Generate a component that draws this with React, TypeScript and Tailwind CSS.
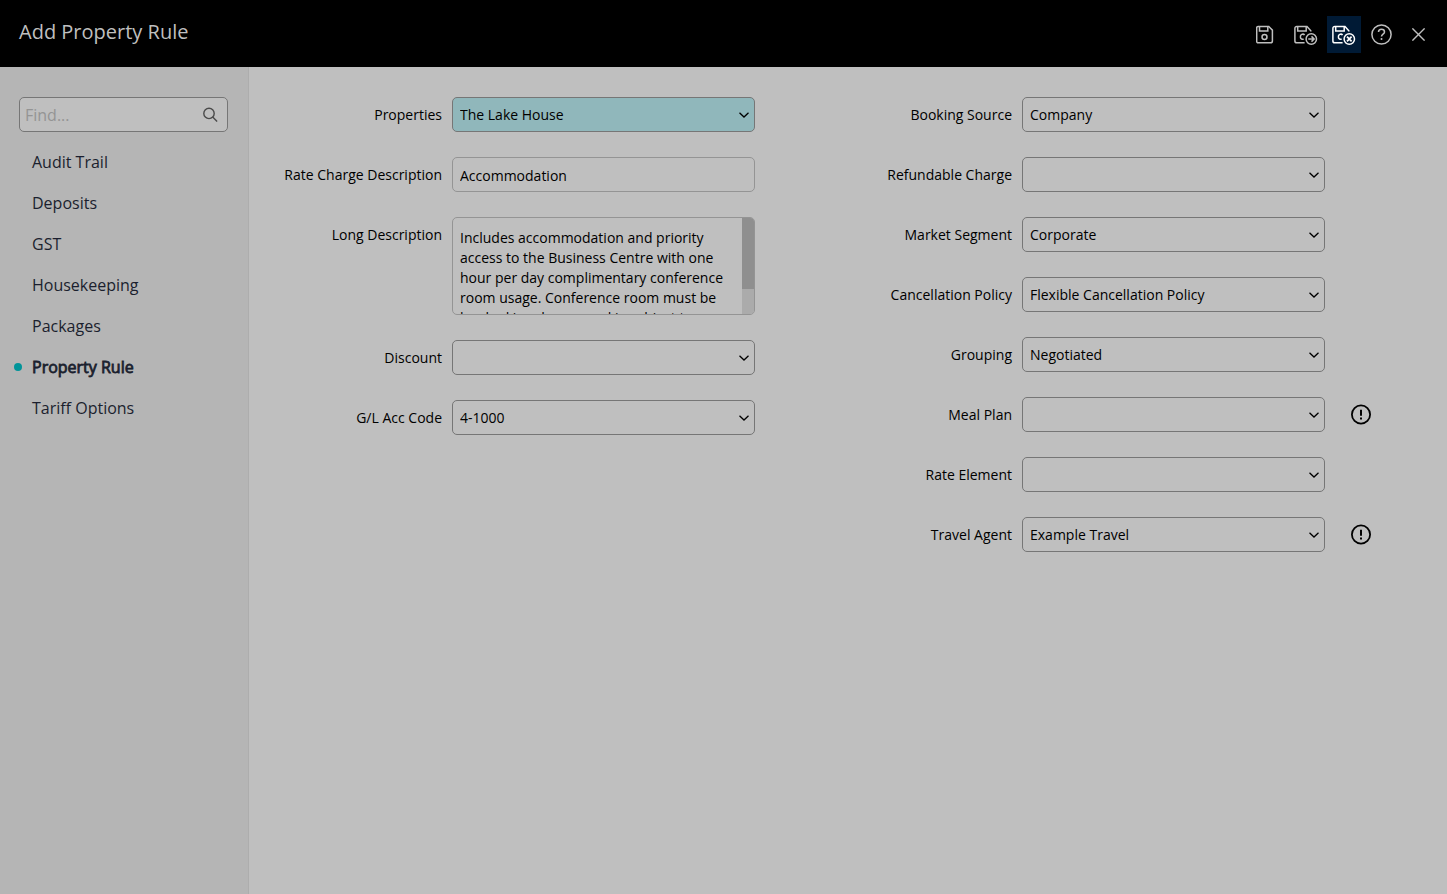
import React, { useState } from 'react';

interface FieldProps {
  id: string;
  label: string;
  info?: boolean;
  children: React.ReactNode;
}

interface SelectFieldProps {
  id: string;
  label: string;
  value?: string;
  info?: boolean;
  highlighted?: boolean;
}

const navItems = [
  'Audit Trail',
  'Deposits',
  'GST',
  'Housekeeping',
  'Packages',
  'Property Rule',
  'Tariff Options',
];

const rightFields: SelectFieldProps[] = [
  { id: 'bookingSource', label: 'Booking Source', value: 'Company' },
  { id: 'refundableCharge', label: 'Refundable Charge' },
  { id: 'marketSegment', label: 'Market Segment', value: 'Corporate' },
  { id: 'cancellationPolicy', label: 'Cancellation Policy', value: 'Flexible Cancellation Policy' },
  { id: 'grouping', label: 'Grouping', value: 'Negotiated' },
  { id: 'mealPlan', label: 'Meal Plan', info: true },
  { id: 'rateElement', label: 'Rate Element' },
  { id: 'travelAgent', label: 'Travel Agent', value: 'Example Travel', info: true },
];

const defaultDescription =
  'Includes accommodation and priority access to the Business Centre with one hour per day complimentary conference room usage. Conference room must be booked in advance and is subject to availability.';

function SaveIcon() {
  return (
    <svg className="w-[19px] h-[19px]" viewBox="0 0 19 19" fill="none" stroke="currentColor" strokeWidth="1.5">
      <path d="M2.2 1.5h10.6l3.6 3.6v10.8a1.9 1.9 0 0 1-1.9 1.9H2.2a1.5 1.5 0 0 1-1.5-1.9V3.4a1.5 1.5 0 0 1 1.5-1.9z" />
      <path d="M3.5 1.5v4.6h8.3V1.5" />
      <circle cx="8.5" cy="12" r="2.5" />
    </svg>
  );
}

function SaveActionIcon({ action }: { action: 'next' | 'close' }) {
  return (
    <svg className="w-6 h-[21px]" viewBox="0 0 24 21" fill="none" stroke="currentColor" strokeWidth="1.5">
      <path d="M10.6 18.8H2.8a1.9 1.9 0 0 1-1.9-1.9V4.4a1.9 1.9 0 0 1 1.9-1.9h10.2l3.8 4.2v.9" />
      <path d="M3.7 2.5v4.4h8.5V2.5" />
      <path d="M10.6 11a2.4 2.4 0 0 0-4.2 1.9c0 1.6 1.3 2.6 3.3 2.4" />
      <circle cx="17.3" cy="15" r="5.2" />
      {action === 'next' ? (
        <path d="M14.3 15h5.6M17.5 12.4l2.6 2.6-2.6 2.6" />
      ) : (
        <path d="M15 12.7l4.6 4.6M19.6 12.7L15 17.3" strokeWidth="1.7" />
      )}
    </svg>
  );
}

function HelpIcon() {
  return (
    <svg className="w-[21px] h-[21px]" viewBox="0 0 21 21" fill="none" stroke="currentColor" strokeWidth="1.5">
      <circle cx="10.5" cy="10.5" r="9.6" />
      <path d="M7.5 8.1c0-1.8 1.3-2.8 3-2.8s3 1 3 2.6c0 2.2-3 2.2-3 4.5" />
      <circle cx="10.5" cy="15" r="1" fill="currentColor" stroke="none" />
    </svg>
  );
}

function CloseIcon() {
  return (
    <svg className="w-[13px] h-[13px]" viewBox="0 0 13 13" fill="none" stroke="currentColor" strokeWidth="1.4">
      <path d="M.4.4l12.2 12.2M12.6.4L.4 12.6" />
    </svg>
  );
}

function InfoIcon() {
  return (
    <svg className="w-[21px] h-[21px]" viewBox="0 0 21 21" fill="none" stroke="currentColor" strokeWidth="1.8">
      <circle cx="10" cy="10.5" r="9.1" />
      <path d="M10 5.8v6M10 13.6v2" strokeWidth="2" />
    </svg>
  );
}

function Field({ id, label, info, children }: FieldProps) {
  return (
    <div className="flex items-start">
      <label htmlFor={id} className="w-[173px] shrink-0 text-right leading-[35px] mr-[10px]">
        {label}
      </label>
      <div className="relative flex flex-1 min-w-0">{children}</div>
      <div className="w-[84px] h-[35px] shrink-0 flex items-center pl-[26px]">
        {info && (
          <button type="button" aria-label={`${label} information`}>
            <InfoIcon />
          </button>
        )}
      </div>
    </div>
  );
}

function SelectField({ id, label, value = '', info, highlighted }: SelectFieldProps) {
  return (
    <Field id={id} label={label} info={info}>
      <select
        id={id}
        defaultValue={value}
        className={`appearance-none w-full h-[35px] pl-[7px] pr-6 border border-[#767676] rounded-[5px] outline-none ${
          highlighted ? 'bg-[#90b7bb]' : 'bg-[#bfbfbf]'
        }`}
      >
        <option value={value}>{value}</option>
      </select>
      <svg
        className="absolute right-[6px] top-[14px] w-[10px] h-[7px] pointer-events-none"
        viewBox="0 0 10 7"
        fill="none"
        stroke="currentColor"
        strokeWidth="1.3"
      >
        <path d="M.5 1.8L5 6l4.5-4.2" />
      </svg>
    </Field>
  );
}

function DescriptionField() {
  const [scroll, setScroll] = useState(0);

  return (
    <Field id="longDescription" label="Long Description">
      <textarea
        id="longDescription"
        defaultValue={defaultDescription}
        onScroll={(e) => setScroll(e.currentTarget.scrollTop / e.currentTarget.scrollHeight)}
        className="w-full h-[98px] pl-[7px] pr-[19px] pt-[10px] leading-5 border border-[#949494] rounded-[5px] outline-none resize-none [scrollbar-width:none]"
      />
      <div className="absolute inset-px rounded-[4px] overflow-hidden flex justify-end pointer-events-none">
        <div className="w-3 bg-[#ababab]">
          <div className="h-[71px] bg-[#8f8f8f]" style={{ marginTop: scroll * 96 }} />
        </div>
      </div>
    </Field>
  );
}

export default function App() {
  const [active, setActive] = useState('Property Rule');

  return (
    <div className="min-h-screen flex flex-col bg-[#bfbfbf] text-black text-sm font-['Open_Sans',sans-serif]">
      <header className="flex items-start justify-between bg-black text-[#bfbfbf] pt-4 pb-[14px] pl-[19px] pr-3">
        <h1 className="text-xl leading-8">Add Property Rule</h1>
        <div className="flex gap-1">
          <button type="button" aria-label="Save" className="w-[39px] h-[37px] flex items-center justify-center">
            <SaveIcon />
          </button>
          <button type="button" aria-label="Save and next" className="w-[34px] h-[37px] flex items-center justify-center">
            <SaveActionIcon action="next" />
          </button>
          <button
            type="button"
            aria-label="Save and close"
            className="w-[34px] h-[37px] flex items-center justify-center bg-[#001a35] text-white"
          >
            <SaveActionIcon action="close" />
          </button>
          <button type="button" aria-label="Help" className="w-[33px] h-[37px] flex items-center justify-center">
            <HelpIcon />
          </button>
          <button type="button" aria-label="Close" className="w-[33px] h-[37px] flex items-center justify-center">
            <CloseIcon />
          </button>
        </div>
      </header>

      <div className="flex flex-1">
        <aside className="w-[249px] shrink-0 bg-[#b5b5b5] border-r border-[#adadad] pt-[30px] pl-[19px] pr-5">
          <div className="flex items-center h-[35px] pl-[5px] pr-[9px] border border-[#767676] rounded-[5px] bg-[#bfbfbf]">
            <input
              type="text"
              aria-label="Find"
              placeholder="Find..."
              className="flex-1 min-w-0 text-base outline-none placeholder:text-[#949494]"
            />
            <svg className="w-[15px] h-[15px] text-[#4a4a4a]" viewBox="0 0 15 15" fill="none" stroke="currentColor" strokeWidth="1.4">
              <circle cx="6" cy="6.4" r="5.2" />
              <path d="M9.7 10.1l4.4 4.4" />
            </svg>
          </div>
          <nav className="mt-[9px] -ml-[5px]">
            {navItems.map((item) => (
              <a
                key={item}
                href="#"
                onClick={(e) => {
                  e.preventDefault();
                  setActive(item);
                }}
                className={`flex items-center gap-[10px] h-[41px] text-base text-[#1b1f2e] ${
                  item === active ? '[-webkit-text-stroke:0.05em]' : ''
                }`}
              >
                <span className={`w-2 h-2 rounded-full ${item === active ? 'bg-[#009499]' : ''}`} />
                {item}
              </a>
            ))}
          </nav>
        </aside>

        <main className="flex-1 grid grid-cols-2 items-start pt-[30px] pl-5 pr-[38px]">
          <div className="flex flex-col gap-[25px]">
            <SelectField id="properties" label="Properties" value="The Lake House" highlighted />
            <Field id="rateChargeDescription" label="Rate Charge Description">
              <input
                id="rateChargeDescription"
                type="text"
                defaultValue="Accommodation"
                className="w-full h-[35px] px-[7px] pt-[2px] border border-[#949494] rounded-[5px] outline-none"
              />
            </Field>
            <DescriptionField />
            <SelectField id="discount" label="Discount" />
            <SelectField id="glAccCode" label="G/L Acc Code" value="4-1000" />
          </div>

          <div className="flex flex-col gap-[25px]">
            {rightFields.map((field) => (
              <SelectField key={field.id} {...field} />
            ))}
          </div>
        </main>
      </div>
    </div>
  );
}
